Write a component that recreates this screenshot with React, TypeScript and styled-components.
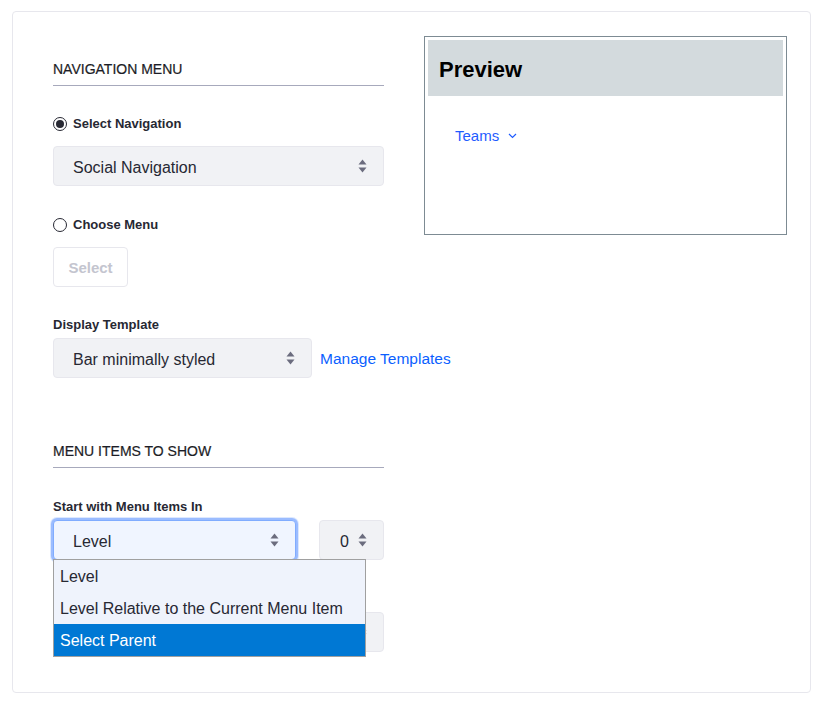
import React from "react";
import styled, { createGlobalStyle, css } from "styled-components";

const GlobalStyle = createGlobalStyle`
  html, body {
    margin: 0;
    padding: 0;
    background: #ffffff;
  }
  body {
    font-family: "Liberation Sans", Arial, sans-serif;
    color: #272833;
  }
  * { box-sizing: border-box; }
`;

const Page = styled.div`
  padding: 11px 9px 9px 12px;
`;

const Card = styled.div`
  border: 1px solid #e7e7ed;
  border-radius: 4px;
  padding: 24px 23px 40px 40px;
  display: flex;
  align-items: flex-start;
  gap: 40px;
`;

const LeftColumn = styled.div`
  width: 331px;
  display: flex;
  flex-direction: column;
`;

const RightColumn = styled.div`
  width: 363px;
`;

const SectionTitle = styled.div<{ $top: number }>`
  margin-top: ${(p) => p.$top}px;
  font-size: 14px;
  line-height: 20px;
  text-transform: uppercase;
  padding-bottom: 6px;
  border-bottom: 1px solid #a7a9bc;
  color: #1c1d26;
  -webkit-text-stroke: 0.2px #1c1d26;
`;

const RadioRow = styled.label<{ $top: number }>`
  margin-top: ${(p) => p.$top}px;
  display: flex;
  align-items: center;
  gap: 6px;
  font-size: 13px;
  font-weight: 700;
  line-height: 20px;
`;

const RadioCircle = styled.span<{ $checked?: boolean }>`
  width: 14px;
  height: 14px;
  border-radius: 50%;
  border: 1px solid #272833;
  display: flex;
  align-items: center;
  justify-content: center;
  &::after {
    content: "";
    width: 8px;
    height: 8px;
    border-radius: 50%;
    background: ${(p) => (p.$checked ? "#272833" : "transparent")};
  }
`;

const FieldLabel = styled.div<{ $top: number }>`
  margin-top: ${(p) => p.$top}px;
  font-size: 13px;
  font-weight: 700;
  line-height: 20px;
`;

const SelectBox = styled.div<{ $top?: number; $width?: number; $focused?: boolean; $pad?: number }>`
  margin-top: ${(p) => p.$top ?? 0}px;
  width: ${(p) => (p.$width ? `${p.$width}px` : "100%")};
  height: 40px;
  flex-shrink: 0;
  display: flex;
  align-items: center;
  justify-content: space-between;
  padding: 0 16px 0 ${(p) => p.$pad ?? 19}px;
  background: #f1f2f5;
  border: 1px solid #e7e7ed;
  border-radius: 4px;
  font-size: 16px;
  color: #272833;
  ${(p) =>
    p.$focused &&
    css`
      background: #f0f5ff;
      border-color: #80acff;
      box-shadow: 0 0 0 2px #9bbcff, 0 0 0 3px rgba(155, 188, 255, 0.35);
    `}
`;

const SelectText = styled.span`
  white-space: nowrap;
  padding-top: 4px;
`;

const Arrow = () => (
  <svg width="9" height="14" viewBox="0 0 9 14" aria-hidden="true">
    <path d="M4.5 0.5 L8.5 5.5 L0.5 5.5 Z" fill="#6b6c7e" />
    <path d="M0.5 8.5 L8.5 8.5 L4.5 13.5 Z" fill="#6b6c7e" />
  </svg>
);

const DisabledButton = styled.button<{ $top: number }>`
  margin-top: ${(p) => p.$top}px;
  align-self: flex-start;
  width: 75px;
  height: 40px;
  padding: 0;
  background: #ffffff;
  border: 1px solid #e7e7ed;
  border-radius: 4px;
  font-family: inherit;
  font-size: 15px;
  font-weight: 700;
  color: #c4c5cf;
`;

const InlineRow = styled.div<{ $top: number; $gap: number }>`
  margin-top: ${(p) => p.$top}px;
  display: flex;
  align-items: center;
  gap: ${(p) => p.$gap}px;
  position: relative;
`;

const Link = styled.a`
  color: #0b5fff;
  font-size: 15.5px;
  text-decoration: none;
  white-space: nowrap;
  margin-top: 2px;
`;

const Listbox = styled.ul`
  position: absolute;
  top: 39px;
  left: 0;
  width: 313px;
  margin: 0;
  padding: 0;
  list-style: none;
  background: #eff3fc;
  border: 1px solid #a0a0a0;
  z-index: 5;
`;

const Option = styled.li<{ $selected?: boolean }>`
  height: 32px;
  line-height: 30px;
  padding: 2px 0 0 6px;
  font-size: 16px;
  color: ${(p) => (p.$selected ? "#ffffff" : "#272833")};
  background: ${(p) => (p.$selected ? "#0078d4" : "transparent")};
  white-space: nowrap;
`;

const PreviewBox = styled.div`
  height: 199px;
  border: 1px solid #7d8b93;
  padding: 3px;
`;

const PreviewHeader = styled.div`
  height: 56px;
  background: #d3dadd;
  display: flex;
  align-items: center;
  padding: 4px 0 0 11px;
  font-size: 22px;
  font-weight: 700;
  color: #000000;
`;

const PreviewBody = styled.div`
  padding: 30px 0 0 27px;
`;

const NavItem = styled.a`
  display: inline-flex;
  align-items: center;
  gap: 9px;
  color: #1f5cff;
  font-size: 15px;
  line-height: 20px;
  text-decoration: none;
`;

const Chevron = () => (
  <svg width="9" height="6" viewBox="0 0 9 6" aria-hidden="true">
    <path d="M1 1 L4.5 4.5 L8 1" fill="none" stroke="#1f5cff" strokeWidth="1.2" />
  </svg>
);

export default function App() {
  return (
    <>
      <GlobalStyle />
      <Page>
        <Card>
          <LeftColumn>
            <SectionTitle $top={23}>Navigation Menu</SectionTitle>

            <RadioRow $top={28}>
              <RadioCircle $checked />
              Select Navigation
            </RadioRow>
            <SelectBox $top={12}>
              <SelectText>Social Navigation</SelectText>
              <Arrow />
            </SelectBox>

            <RadioRow $top={29}>
              <RadioCircle />
              Choose Menu
            </RadioRow>
            <DisabledButton $top={12} disabled>
              Select
            </DisabledButton>

            <FieldLabel $top={28}>Display Template</FieldLabel>
            <InlineRow $top={3} $gap={8}>
              <SelectBox $width={259}>
                <SelectText>Bar minimally styled</SelectText>
                <Arrow />
              </SelectBox>
              <Link href="#">Manage Templates</Link>
            </InlineRow>

            <SectionTitle $top={63}>Menu Items to Show</SectionTitle>

            <FieldLabel $top={29}>Start with Menu Items In</FieldLabel>
            <InlineRow $top={3} $gap={23}>
              <SelectBox $width={243} $focused>
                <SelectText>Level</SelectText>
                <Arrow />
              </SelectBox>
              <SelectBox $width={65} $pad={20}>
                <SelectText>0</SelectText>
                <Arrow />
              </SelectBox>
              <Listbox role="listbox">
                <Option>Level</Option>
                <Option>Level Relative to the Current Menu Item</Option>
                <Option $selected>Select Parent</Option>
              </Listbox>
            </InlineRow>

            <SelectBox $top={52}>
              <span />
              <Arrow />
            </SelectBox>
          </LeftColumn>

          <RightColumn>
            <PreviewBox>
              <PreviewHeader>Preview</PreviewHeader>
              <PreviewBody>
                <NavItem href="#">
                  Teams
                  <Chevron />
                </NavItem>
              </PreviewBody>
            </PreviewBox>
          </RightColumn>
        </Card>
      </Page>
    </>
  );
}
